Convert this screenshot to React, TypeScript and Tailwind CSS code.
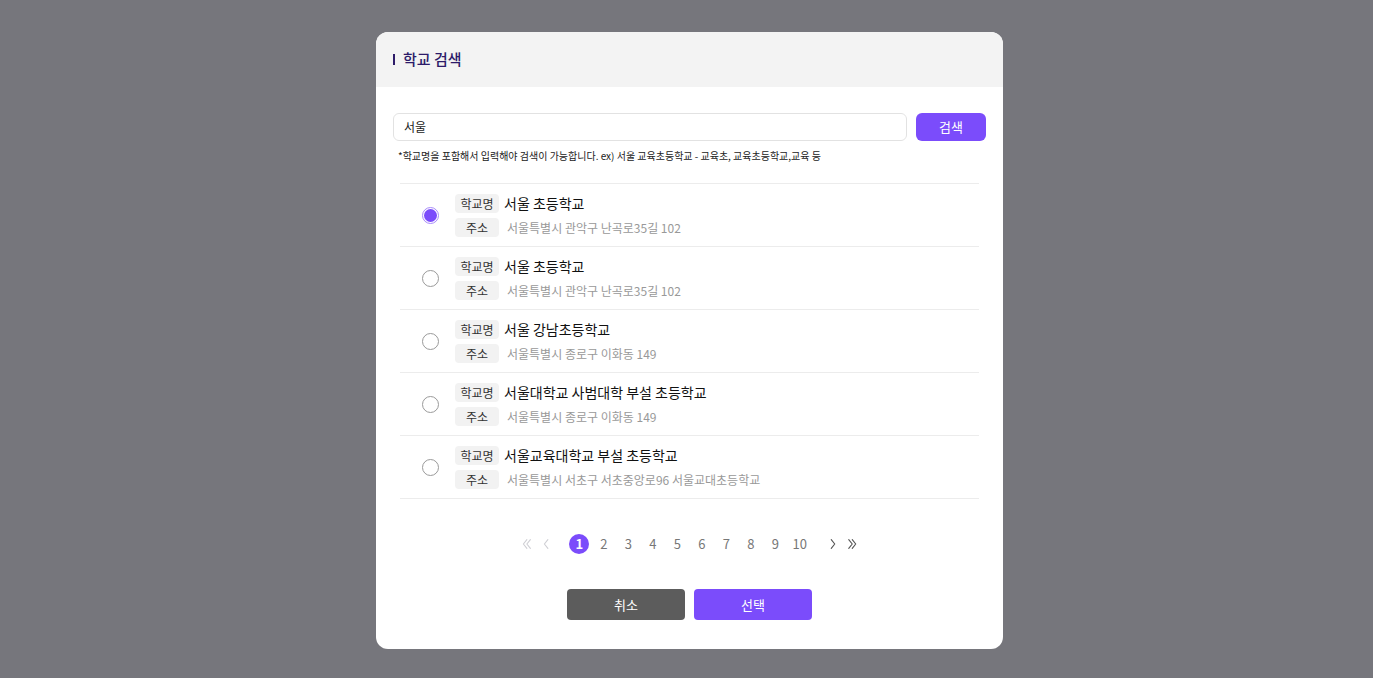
import { useState } from 'react';

const schools = [
  { name: '서울 초등학교', addr: '서울특별시 관악구 난곡로35길 102' },
  { name: '서울 초등학교', addr: '서울특별시 관악구 난곡로35길 102' },
  { name: '서울 강남초등학교', addr: '서울특별시 종로구 이화동 149' },
  { name: '서울대학교 사범대학 부설 초등학교', addr: '서울특별시 종로구 이화동 149' },
  { name: '서울교육대학교 부설 초등학교', addr: '서울특별시 서초구 서초중앙로96 서울교대초등학교' },
];

const pages = [1, 2, 3, 4, 5, 6, 7, 8, 9, 10];

function Chevron({ dir, double, muted }: { dir: 'l' | 'r'; double?: boolean; muted?: boolean }) {
  const d = dir === 'l' ? 'M9 3L5 8l4 5' : 'M6 3l4 5-4 5';
  const d2 = dir === 'l' ? 'M13 3L9 8l4 5' : 'M2 3l4 5-4 5';
  return (
    <svg width="14" height="16" viewBox="0 0 16 16" fill="none" stroke={muted ? '#cfcfd4' : '#555'} strokeWidth="1.3" strokeLinecap="round" strokeLinejoin="round">
      <path d={d} />
      {double && <path d={d2} />}
    </svg>
  );
}

export default function App() {
  const [selected, setSelected] = useState(0);

  return (
    <div
      className="min-h-screen w-full bg-[#76767c] flex justify-center pt-[32px] pl-[6px]"
      style={{ fontFamily: '"Noto Sans CJK KR", "Noto Sans", sans-serif' }}
    >
      <div className="w-[627px] h-[617px] bg-white rounded-[12px] overflow-hidden flex flex-col">
        {/* Header */}
        <div className="h-[55px] bg-[#f3f3f3] flex items-center px-[17px] gap-[8px]">
          <span className="w-[2px] h-[11px] bg-[#2d1b69]" />
          <span className="text-[15px] font-medium text-[#2d1b69]">학교 검색</span>
        </div>

        {/* Body */}
        <div className="px-[17px] pt-[26px]">
          <div className="flex gap-[9px]">
            <div className="flex-1 h-[28px] border border-[#e2e2e2] rounded-[6px] flex items-center px-[10px] text-[12px] text-[#222]">
              서울
            </div>
            <button className="w-[70px] h-[28px] rounded-[6px] bg-[#7b4cfb] text-white text-[13px]">검색</button>
          </div>
          <p className="mt-[7px] px-[5px] text-[10px] text-[#222]">
            *학교명을 포함해서 입력해야 검색이 가능합니다. ex) 서울 교육초등학교 - 교육초, 교육초등학교,교육 등
          </p>

          <ul className="mt-[20px] mx-[7px] border-t border-[#ececec]">
            {schools.map((s, i) => (
              <li
                key={i}
                className="h-[63px] border-b border-[#ececec] flex items-center cursor-pointer"
                onClick={() => setSelected(i)}
              >
                <div className="w-[55px] flex justify-center pl-[5px]">
                  {selected === i ? (
                    <span className="w-[17px] h-[17px] rounded-full border border-[#a88bfa] flex items-center justify-center">
                      <span className="w-[13px] h-[13px] rounded-full bg-[#7b4cfb]" />
                    </span>
                  ) : (
                    <span className="w-[17px] h-[17px] rounded-full border border-[#9a9a9a]" />
                  )}
                </div>
                <div className="flex flex-col gap-[4px]">
                  <div className="flex items-center gap-[5px]">
                    <span className="w-[44px] h-[19px] rounded-[4px] bg-[#f2f2f2] text-[12px] text-[#333] flex items-center justify-center">학교명</span>
                    <span className="text-[14px] text-[#111]">{s.name}</span>
                  </div>
                  <div className="flex items-center gap-[8px]">
                    <span className="w-[44px] h-[19px] rounded-[4px] bg-[#f2f2f2] text-[12px] text-[#333] flex items-center justify-center">주소</span>
                    <span className="text-[12px] text-[#999]">{s.addr}</span>
                  </div>
                </div>
              </li>
            ))}
          </ul>

          {/* Pagination */}
          <div className="mt-[35px] flex items-center justify-center text-[13px] text-[#777]">
            <span className="w-[21px] flex justify-center"><Chevron dir="l" double muted /></span>
            <span className="w-[21px] flex justify-center"><Chevron dir="l" muted /></span>
            <div className="flex items-center ml-[10px] mr-[10px]">
              {pages.map((p) => (
                <span key={p} className="w-[24.5px] flex justify-center">
                  {p === 1 ? (
                    <span className="w-[20px] h-[20px] rounded-full bg-[#7b4cfb] text-white font-bold flex items-center justify-center">1</span>
                  ) : (
                    <span>{p}</span>
                  )}
                </span>
              ))}
            </div>
            <span className="w-[21px] flex justify-center"><Chevron dir="r" /></span>
            <span className="w-[21px] flex justify-center"><Chevron dir="r" double /></span>
          </div>

          {/* Actions */}
          <div className="mt-[35px] flex justify-center gap-[9px]">
            <button className="w-[118px] h-[31px] rounded-[4px] bg-[#5c5c5c] text-white text-[13px]">취소</button>
            <button className="w-[118px] h-[31px] rounded-[4px] bg-[#7b4cfb] text-white text-[13px]">선택</button>
          </div>
        </div>
      </div>
    </div>
  );
}
